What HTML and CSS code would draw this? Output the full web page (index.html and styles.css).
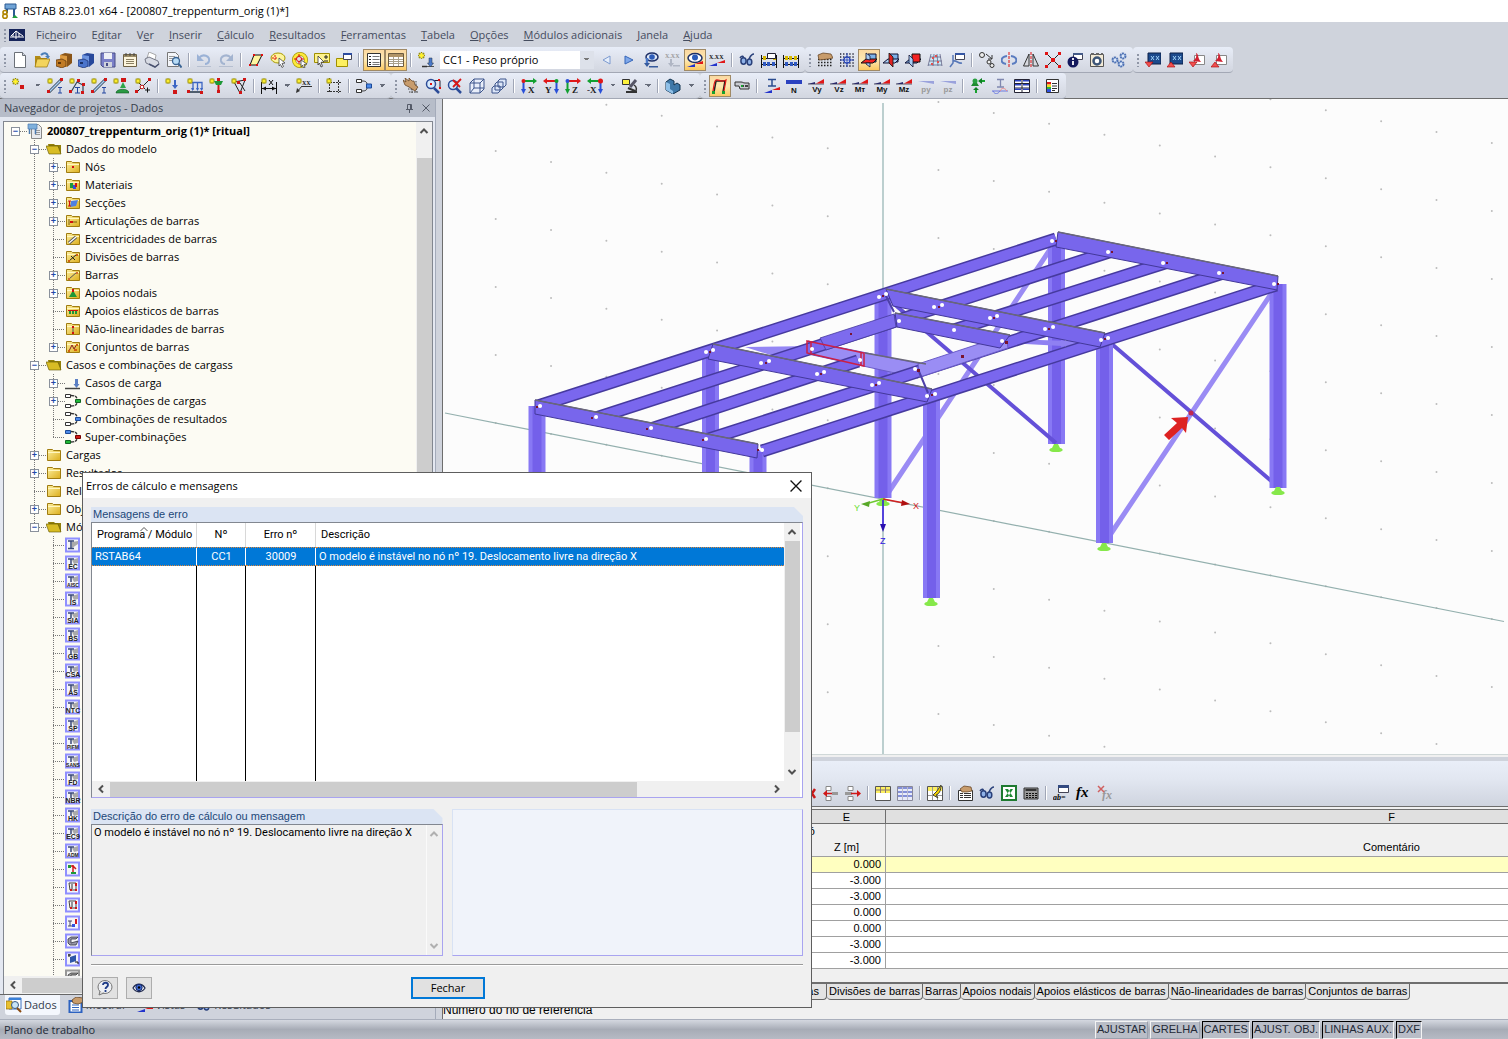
FILE: index.html
```html
<!DOCTYPE html>
<html lang="pt">
<head>
<meta charset="utf-8">
<title>RSTAB 8.23.01 x64 - [200807_treppenturm_orig (1)*]</title>
<link rel="stylesheet" href="styles.css">
</head>
<body>
<svg class="sprite" aria-hidden="true">
<defs>
<linearGradient id="gy" x1="0" y1="0" x2="1" y2="1"><stop offset="0" stop-color="#fdf0a0"/><stop offset="1" stop-color="#dcae1c"/></linearGradient>
<symbol id="st" viewBox="0 0 16 16"><path d="M4 0v8M0 4h8M1 1l6 6M7 1L1 7" stroke="#8f8400" stroke-width="1.6"/><path d="M4 1v6M1 4h6M2 2l4 4M6 2L2 6" stroke="#fff22e" stroke-width="1.2"/></symbol>
<symbol id="app" viewBox="0 0 16 16"><path d="M3 1h11v5H3z" fill="#6fa3d6" stroke="#2c5a92"/><path d="M5 6v4M12 6v8" stroke="#2c5a92" stroke-width="2"/><path d="M10 15h6l-3-3z" fill="#1ea03a"/><circle cx="3" cy="9.500" r="2" fill="none" stroke="#b08600" stroke-width="1.600"/><circle cx="3" cy="13.200" r="2.200" fill="none" stroke="#b08600" stroke-width="1.600"/></symbol>
<symbol id="mdi" viewBox="0 0 16 12"><path d="M0 0h16v12H0z" fill="#16245a"/><path d="M1 8h14M7 2v8M2 7l5-5 7 5M4 8V5M10 8V4" stroke="#fff" fill="none"/></symbol>
<symbol id="new" viewBox="0 0 16 16"><path d="M2.500 .5h8l3 3v12h-11z" fill="#fff" stroke="#6b7078"/><path d="M10.500 .5v3h3" fill="#d4d8e0" stroke="#6b7078"/></symbol>
<symbol id="open" viewBox="0 0 16 16"><path d="M1 4h5l1 2h6v9H1z" fill="#b28b16"/><path d="M3 7h13l-3 8H1z" fill="#f3d45d" stroke="#97720c" stroke-width=".7"/><path d="M7 3c3-3 6-2 7 1" fill="none" stroke="#4b7fb8" stroke-width="2"/><path d="M11 4h5l-2 3z" fill="#4b7fb8"/></symbol>
<symbol id="boxo" viewBox="0 0 16 16"><path d="M4 3l5-2 7 1v9l-5 4-7-2z" fill="#8a5417"/><path d="M4 3l7 1v11l-7-2z" fill="#dd9b42"/><path d="M0 8l6-1 4 2v5l-4 2-6-2z" fill="#c17b25" stroke="#58310a" stroke-width=".7"/><path d="M2 11h3" stroke="#402200" stroke-width="1.500"/></symbol>
<symbol id="boxb" viewBox="0 0 16 16"><path d="M4 3l5-2 7 1v9l-5 4-7-2z" fill="#27489b"/><path d="M4 3l7 1v11l-7-2z" fill="#6e95e0"/><path d="M0 8l6-1 4 2v5l-4 2-6-2z" fill="#4a74cc" stroke="#172d6b" stroke-width=".7"/><path d="M2 11h3" stroke="#0d1c48" stroke-width="1.500"/></symbol>
<symbol id="save" viewBox="0 0 16 16"><path d="M1 1h14v14H3l-2-2z" fill="#7b80c8" stroke="#484c86"/><path d="M4 1h8v6H4z" fill="#eef0f6"/><path d="M4 10h8v5H4z" fill="#d0d3dc"/><path d="M6 11h2v3H6z" fill="#484c86"/></symbol>
<symbol id="clip" viewBox="0 0 16 16"><path d="M1.500 2.500h13v12h-13z" fill="#fdf5dc" stroke="#6e6044"/><path d="M2 3h12v2H2z" fill="#9a8c68"/><path d="M4 1v3M8 1v3M12 1v3" stroke="#444"/><path d="M4 7.500h8M4 9.500h8M4 11.500h8" stroke="#8a7f63"/></symbol>
<symbol id="print" viewBox="0 0 16 16"><path d="M3 6l2-6 7 3-1 5z" fill="#fff" stroke="#888" stroke-width=".7"/><path d="M1 7l4-2 9 4 1 3-4 3-9-4z" fill="#d8dbe4" stroke="#5c6070" stroke-width=".8"/><path d="M5 12l6 3 4-3" stroke="#4a5270" stroke-width="1.500" fill="none"/></symbol>
<symbol id="prev" viewBox="0 0 16 16"><path d="M1.500 .5h8l3 3v11h-11z" fill="#f4f6fa" stroke="#777"/><path d="M3 4.500h6M3 6.500h7M3 8.500h4" stroke="#999"/><circle cx="10" cy="9" r="3.500" fill="#b8dcf6" stroke="#3a6494" stroke-width="1.300"/><path d="M12.500 11.500l3 4" stroke="#3a6494" stroke-width="2"/></symbol>
<symbol id="undo" viewBox="0 0 16 16"><path d="M3 6c4-5 11-2 10 3-.5 2-2 3-4 3" fill="none" stroke="#9bb2d6" stroke-width="2"/><path d="M1 2v7h7z" fill="#9bb2d6"/><path d="M1 14.500h14" stroke="#b6bfd0"/></symbol>
<symbol id="redo" viewBox="0 0 16 16"><path d="M13 6C9 1 2 4 3 9c.5 2 2 3 4 3" fill="none" stroke="#a3b4d0" stroke-width="2"/><path d="M15 2v7H8z" fill="#a3b4d0"/><path d="M1 14.500h14" stroke="#b6bfd0"/></symbol>
<symbol id="selp" viewBox="0 0 16 16"><path d="M6 3h8l-5 10H2z" fill="#fff6a0" stroke="#111"/><path d="M5 2h2v2H5zM13 2h2v2h-2zM1 12h2v2H1zM8 12h2v2H8z" fill="#e01010"/></symbol>
<symbol id="sele" viewBox="0 0 16 16"><ellipse cx="8" cy="6" rx="7" ry="5" fill="#fdf59a" stroke="#a89800"/><path d="M5 3v6M2 6h6" stroke="#e01010" stroke-dasharray="2 1"/><path d="M9 6l6 5-3 .5 1.500 3-1.500 1-1.500-3L9 14z" fill="#fff" stroke="#444" stroke-width=".8"/></symbol>
<symbol id="selr" viewBox="0 0 16 16"><circle cx="8" cy="8" r="6" fill="none" stroke="#a89800" stroke-width="4"/><circle cx="8" cy="8" r="6" fill="none" stroke="#fdea3c" stroke-width="2.500"/><circle cx="7" cy="7" r="2.500" fill="none" stroke="#e01010"/><path d="M7 2v3M7 9v3M2 7h3M9 7h3" stroke="#e01010"/><path d="M9 8l6 4-3 .5 1 3-1.500.5-1-3L9 15z" fill="#fff" stroke="#444" stroke-width=".8"/></symbol>
<symbol id="selw" viewBox="0 0 16 16"><path d="M.5 1.500h15v9H.5z" fill="#fdf28c" stroke="#a08f00"/><path d="M4 4l6 6-3 .3 1.500 4-1.500.7-1.500-4L4 13z" fill="#fff" stroke="#333" stroke-width=".8"/><path d="M12 3v4M10 5h4M10 9h4" stroke="#222"/></symbol>
<symbol id="selo" viewBox="0 0 16 16"><path d="M.5 6.500h11v8H.5z" fill="#fdf060" stroke="#a08f00"/><path d="M7.500 1.500h8v6h-8z" fill="#fff" stroke="#445"/><path d="M7 1h9v2H7z" fill="#2c4ca0"/></symbol>
<symbol id="nav" viewBox="0 0 16 16"><path d="M1.500 1.500h13v13h-13z" fill="#fff" stroke="#333"/><path d="M3 4.500h2M3 7.500h2M3 10.500h2M3 12.500h2" stroke="#222"/><path d="M6.500 4.500h7M6.500 7.500h7M6.500 10.500h7M6.500 12.500h7" stroke="#777"/></symbol>
<symbol id="tab" viewBox="0 0 16 16"><path d="M.5 1.500h15v13H.5z" fill="#fff" stroke="#6a5a40"/><path d="M1 2h14v3H1z" fill="#b09468"/><path d="M1 7.500h14M1 9.500h14M1 11.500h14M5.500 5v9M10.500 5v9" stroke="#a9a08c"/></symbol>
<symbol id="lcn" viewBox="0 0 16 16"><use href="#st" width="14" height="14"/><path d="M9 14.500h7" stroke="#555"/><path d="M11 6h3v5h1.500l-3 4-3-4H11z" fill="#4a78c8" stroke="#234" stroke-width=".5"/><path d="M4 14.500h5" stroke="#333" stroke-width="1.500"/></symbol>
<symbol id="pl" viewBox="0 0 16 16"><path d="M11 4v8L4 8z" fill="#e6eefa" stroke="#7c9ad0"/></symbol>
<symbol id="pr" viewBox="0 0 16 16"><path d="M4 4v8l8-4z" fill="#7fa8ea" stroke="#3565b8"/></symbol>
<symbol id="eyel" viewBox="0 0 16 16"><ellipse cx="9" cy="5" rx="6" ry="4" fill="#dfe8f6" stroke="#1d2f66" stroke-width="1.500"/><circle cx="9" cy="5" r="2.800" fill="#2d5cb8"/><path d="M4 6v6" stroke="#4a78c8" stroke-width="2.500"/><path d="M1 11h6l-3 4zM6 14h9v1.500H6z" fill="#365a9c"/></symbol>
<symbol id="xxg" viewBox="0 0 16 16"><text x="0" y="6" class="svt g">X.XX</text><path d="M5 7h2v4h2l-3 4-3-4h2zM8 13h7v1.500H8z" fill="#b0b6c4"/></symbol>
<symbol id="eyer" viewBox="0 0 16 16"><ellipse cx="8" cy="6" rx="7" ry="4.500" fill="#fff" stroke="#1d2f66" stroke-width="1.500"/><circle cx="8" cy="5.500" r="3" fill="#2d5cb8"/><path d="M0 15h8v-3z" fill="#2233cc"/><path d="M8 12h8V9z" fill="#e01818"/></symbol>
<symbol id="xxr" viewBox="0 0 16 16"><text x="0" y="7" class="svt">X.XX</text><path d="M0 14h8v-3z" fill="#2233cc"/><path d="M8 11h8V8z" fill="#e01818"/></symbol>
<symbol id="glas" viewBox="0 0 16 16"><path d="M1 6c2-3 4-2 3 1M10 7c1-2 2-5 5-5" fill="none" stroke="#29407a" stroke-width="1.500"/><ellipse cx="4.500" cy="9" rx="2.600" ry="3.200" fill="#8fb2e8" stroke="#29407a" stroke-width="1.500"/><ellipse cx="10.500" cy="10" rx="2.300" ry="3" fill="#8fb2e8" stroke="#29407a" stroke-width="1.500"/></symbol>
<symbol id="aba" viewBox="0 0 16 16"><path d="M.5 3v13M15.500 3v13M0 6.500h16M0 12.500h16" stroke="#111"/><path d="M2 4h3v4H2zM12 4h3v4h-3z" fill="#d6b700"/><path d="M2 10h3v4H2zM6 10h3v4H6zM11 10h3v4h-3z" fill="#2f58c0"/><path d="M6.500 1.500h8v5h-8z" fill="#fff" stroke="#223"/></symbol>
<symbol id="abb" viewBox="0 0 16 16"><path d="M.5 3v13M15.500 3v13M0 6.500h16M0 12.500h16" stroke="#111"/><path d="M2 4h3v4H2zM6 4h3v4H6zM11 4h3v4h-3z" fill="#d6b700"/><path d="M2 10h3v4H2zM7 10h3v4H7zM11 10h3v4h-3z" fill="#2f58c0"/></symbol>
<symbol id="handg" viewBox="0 0 16 16"><path d="M1 7.500h15M1 10.500h15M1 13.500h15" stroke="#222" stroke-width="1.500" stroke-dasharray="1.500 1.500"/><path d="M1 3l5-2 8 1 2 4-5 1-9 1z" fill="#c89c6c" stroke="#5c3a18" stroke-width=".7"/></symbol>
<symbol id="snap" viewBox="0 0 16 16"><path d="M1 2h15M1 5h15M1 8h15M1 11h15M1 14h15" stroke="#223" stroke-width="1.300" stroke-dasharray="1.300 1.800"/><circle cx="8" cy="8" r="3" fill="#fff" stroke="#2a48b8" stroke-width="1.300"/><path d="M8 1v14M1 8h14" stroke="#2a48b8"/></symbol>
<symbol id="wp1" viewBox="0 0 16 16"><path d="M7 2h8v8H7z" fill="#7db2e8" stroke="#113"/><path d="M0 11l5-4h11l-4 4z" fill="#f22222" stroke="#111"/><path d="M5 1l4 3v4l-4-1zM5 11h4v4l-4-3z" fill="#a9cdf4" stroke="#113" stroke-width=".8"/></symbol>
<symbol id="wp2" viewBox="0 0 16 16"><path d="M7 2h8v8H7z" fill="#7db2e8" stroke="#113"/><path d="M0 11l5-4h11l-4 4z" fill="#a9cdf4" stroke="#113"/><path d="M6 1l4 4v10l-4-4z" fill="#e02020" stroke="#111" stroke-width=".8"/></symbol>
<symbol id="wp3" viewBox="0 0 16 16"><path d="M0 11l5-4h11l-4 4z" fill="#7db2e8" stroke="#113"/><path d="M7 2h8v8H7z" fill="#f22222" stroke="#111"/><path d="M4 3l4 4v8l-4-4z" fill="#a9cdf4" stroke="#113" stroke-width=".8"/></symbol>
<symbol id="grd" viewBox="0 0 16 16"><path d="M4 2h9l2 12H1z" fill="#cfe6f4"/><path d="M4 2L1 14M7 2L6 14M10 2l1 12M13 2l2 12M3 5h11M2 9h13M1 13h14" stroke="#668" stroke-width=".8"/><path d="M5 5h2v2H5zM10 9h2v2h-2zM8 3h2v2H8zM4 11h2v2H4z" fill="#e05050"/></symbol>
<symbol id="wrt" viewBox="0 0 16 16"><path d="M6.500 1.500h9v6h-9z" fill="#fff" stroke="#445"/><path d="M6 1h10v2H6z" fill="#3556a4"/><path d="M4 3v8l-3 4M4 9c4-1 5 3 9 2" stroke="#5878b8" stroke-width="1.500" fill="none"/></symbol>
<symbol id="copy" viewBox="0 0 16 16"><circle cx="3" cy="3" r="2.500" fill="#eee" stroke="#333"/><circle cx="10" cy="10" r="2" fill="#eee" stroke="#333"/><circle cx="13" cy="13.500" r="2" fill="#eee" stroke="#333"/><path d="M7 2l6 5M13 3v4H9" stroke="#333" fill="none"/></symbol>
<symbol id="rot" viewBox="0 0 16 16"><path d="M6 4C-1 5-1 11 5 12M10 4c7 1 7 7 1 8" fill="none" stroke="#5a7cc0" stroke-width="2"/><path d="M8 0v16" stroke="#e01010" stroke-dasharray="3 1"/></symbol>
<symbol id="mir" viewBox="0 0 16 16"><path d="M6 2v12H.5zM10 2v12h5.500z" fill="#d7d9df" stroke="#333"/><path d="M8 0v16" stroke="#e01010" stroke-dasharray="3 1"/></symbol>
<symbol id="xx" viewBox="0 0 16 16"><path d="M1 1l14 14M15 1L1 15" stroke="#222"/><path d="M0 0h3v3H0zM13 0h3v3h-3zM0 13h3v3H0zM13 13h3v3h-3zM6 6h4v4H6z" fill="#e01414"/></symbol>
<symbol id="inf" viewBox="0 0 16 16"><path d="M6.500 1.500h9v6h-9z" fill="#fff" stroke="#445"/><path d="M6 1h10v2H6z" fill="#445a88"/><circle cx="6" cy="10" r="5.500" fill="#141a5e"/><path d="M6 6v2M6 9v4" stroke="#fff" stroke-width="1.800"/></symbol>
<symbol id="cog" viewBox="0 0 16 16"><path d="M1.500 2.500h13v12h-13z" fill="#f2ead6" stroke="#555"/><path d="M2 1h3v2H2zM7 1h3v2H7zM12 1h2v2h-2z" fill="#666"/><circle cx="8" cy="9" r="3.500" fill="#fff" stroke="#3c5578" stroke-width="2.500"/></symbol>
<symbol id="cogs" viewBox="0 0 16 16"><g fill="#dce8fa" stroke="#4e72b4" stroke-width="2" stroke-dasharray="2 .6"><circle cx="4" cy="8" r="2.500"/><circle cx="12" cy="4" r="2.500"/><circle cx="10" cy="12" r="2.500"/></g></symbol>
<symbol id="dx1" viewBox="0 0 16 16"><path d="M3 1h13v11H3z" fill="#1c4a8c" stroke="#0c2048"/><path d="M6 4l3 4M9 4L6 8M11 4l3 4M14 4l-3 4" stroke="#9fd0f8"/><path d="M0 10h8l-4 5z" fill="#f05050" stroke="#a00" stroke-width=".6"/></symbol>
<symbol id="dx2" viewBox="0 0 16 16"><path d="M3 1h13v11H3z" fill="#1c4a8c" stroke="#0c2048"/><path d="M6 4l3 4M9 4L6 8M11 4l3 4M14 4l-3 4" stroke="#9fd0f8"/><path d="M0 15h8l-4-5z" fill="#f05050" stroke="#a00" stroke-width=".6"/></symbol>
<symbol id="dx3" viewBox="0 0 16 16"><path d="M5.500 3.500h10v9h-10z" fill="#fff" stroke="#888"/><path d="M7 1c3 1 1 4 5 9l-8-1c3-2 4-5 3-8z" fill="#d02030"/><path d="M0 10h8l-4 5z" fill="#f05050" stroke="#a00" stroke-width=".6"/></symbol>
<symbol id="dx4" viewBox="0 0 16 16"><path d="M5.500 3.500h10v9h-10z" fill="#fff" stroke="#888"/><path d="M7 1c3 1 1 4 5 9l-8-1c3-2 4-5 3-8z" fill="#d02030"/><path d="M0 15h8l-4-5z" fill="#f05050" stroke="#a00" stroke-width=".6"/></symbol>
<symbol id="nn" viewBox="0 0 16 16"><use href="#st" width="14" height="14"/><path d="M8 7h4v4H8z" fill="#d01616"/></symbol>
<symbol id="nm" viewBox="0 0 16 16"><path d="M2 14L14 2" stroke="#345" stroke-width="3"/><path d="M2 14L14 2" stroke="#a9cdf4" stroke-width="1.500"/><path d="M0 12h3v3H0zM13 0h3v3h-3z" fill="#d01616"/><path d="M11 9.500h4M13 9v6M11 15h4" stroke="#2648a0"/><use href="#st" width="12" height="12"/></symbol>
<symbol id="ns" viewBox="0 0 16 16"><path d="M2 14L8 4l6 3v7" fill="none" stroke="#345" stroke-width="1.200"/><path d="M0 12h3v3H0zM8 1h3v3H8zM13 5h3v3h-3zM12 13h3v3h-3z" fill="#d01616"/><use href="#st" width="12" height="12"/><path d="M6 9.500h5M8.500 9v6M6 15h5" stroke="#2648a0"/></symbol>
<symbol id="nsup" viewBox="0 0 16 16"><use href="#st" width="12" height="12"/><path d="M8 0h5v4H8z" fill="#d01616"/><path d="M10 4l3 6H7z" fill="#2ea54a"/><path d="M3 15c0-5 13-5 13 0z" fill="#2a9a44" stroke="#115522" stroke-width=".6"/></symbol>
<symbol id="nh" viewBox="0 0 16 16"><path d="M2 14L14 2M4 5l6 6" stroke="#222"/><path d="M0 12h3v3H0zM13 0h3v3h-3z" fill="#d01616"/><circle cx="7" cy="9" r="1.800" fill="#fff" stroke="#d01616"/><path d="M10 12h5M12.500 9.500v5" stroke="#111"/><use href="#st" width="12" height="12"/></symbol>
<symbol id="l1" viewBox="0 0 16 16"><use href="#st" width="12" height="12"/><path d="M9 2h2v5h2l-3 4-3-4h2z" fill="#3c66c4"/><path d="M8 12h4v4H8z" fill="#d01616"/></symbol>
<symbol id="l2" viewBox="0 0 16 16"><path d="M3 4.500h12v7M6 5v7M10.500 5v7" stroke="#3c66c4" stroke-width="1.300" fill="none"/><path d="M4 10h3l-1.500 3zM9 10h3l-1.500 3zM13 10h3l-1.500 3z" fill="#3c66c4"/><path d="M1 14h14" stroke="#234" stroke-width="1.500"/><path d="M0 12h3v3H0zM13 13h3v3h-3z" fill="#d01616"/><use href="#st" width="12" height="12"/></symbol>
<symbol id="l3" viewBox="0 0 16 16"><use href="#st" width="12" height="12"/><path d="M5 3h9l-2 4H7z" fill="#1e9838"/><path d="M8 0h3v3H8zM8 12h3v3H8z" fill="#d01616"/><path d="M9.500 7v5" stroke="#d01616" stroke-width="2"/></symbol>
<symbol id="l4" viewBox="0 0 16 16"><path d="M3 4l6 11 5-13zM9 5l5 8" fill="none" stroke="#222"/><path d="M8 13h3v3H8zM12 0h3v3h-3zM6 3h3v3H6z" fill="#d01616"/><use href="#st" width="12" height="12"/></symbol>
<symbol id="dim" viewBox="0 0 16 16"><path d="M.5 4v12M15.500 4v12M1 10.500h14" stroke="#111"/><path d="M1 10.500l4-2v4zM15 10.500l-4-2v4z" fill="#111"/><path d="M8 2l4 5M12 2L8 7" stroke="#111"/><use href="#st" width="12" height="12"/></symbol>
<symbol id="com" viewBox="0 0 16 16"><text x="6" y="7" class="svt">XX</text><path d="M6 8.500h10M1 14l5-6" stroke="#333"/><path d="M0 15l1-5 3 3z" fill="#333"/><use href="#st" width="12" height="12"/></symbol>
<symbol id="vis" viewBox="0 0 16 16"><path d="M3.500 0v15M12.500 2v13M1 4.500h14M1 13.500h14" stroke="#333" stroke-dasharray="2 1"/><use href="#st" width="12" height="12"/></symbol>
<symbol id="comb" viewBox="0 0 16 16"><path d="M.5 1.500h5v3h-5zM.5 11.500h5v3h-5z" fill="#fff" stroke="#333"/><path d="M6 3c4 0 5 1 5 4M6 13c4 0 5-1 5-4" fill="none" stroke="#333"/><path d="M10.500 6h5v4h-5z" fill="#4d8ae8" stroke="#1c4a98"/></symbol>
<symbol id="pan" viewBox="0 0 16 16"><path d="M5 8h10M5 11h10M6 14h9M13 3v12M9 6v9" stroke="#444" stroke-dasharray="1.500 1"/><path d="M0 2l3 2-1-4 4 3 0-3 3 3 2 0 1 4 3 2-3 4-6-4-4-2z" fill="#c89c6c" stroke="#5c3a18" stroke-width=".7"/></symbol>
<symbol id="zw" viewBox="0 0 16 16"><path d="M4 2.500h11v8" fill="none" stroke="#223"/><circle cx="6" cy="6" r="4.500" fill="#d8eafc" stroke="#2c4c98" stroke-width="1.500"/><path d="M9 10l5 5" stroke="#2c4c98" stroke-width="2.500"/><path d="M5 5h2v2H5zM14 9h2v2h-2zM13 1h2v2h-2z" fill="#e01010"/></symbol>
<symbol id="zx" viewBox="0 0 16 16"><circle cx="6" cy="7" r="4.500" fill="#d8eafc" stroke="#2c4c98" stroke-width="1.500"/><path d="M9 10l5 5" stroke="#2c4c98" stroke-width="2.500"/><path d="M6 2l7 7M14 1L6 9" stroke="#d81818" stroke-width="1.800"/></symbol>
<symbol id="cube" viewBox="0 0 16 16"><path d="M1 5l4-4h10v10l-4 4H1z" fill="#e8eefa" stroke="#3c558c"/><path d="M1 5h10v10M11 5l4-4M5 1v9h10M5 10l-4 5" fill="none" stroke="#3c558c"/></symbol>
<symbol id="cubs" viewBox="0 0 16 16"><path d="M7 3l2-2h6v6l-2 2H7zM4 6l2-2h6v6l-2 2H4zM1 10l2-2h6v5l-2 2H1z" fill="#dce6f8" stroke="#3c558c"/></symbol>
<symbol id="vx" viewBox="0 0 16 16"><path d="M2 3h12" stroke="#12a030" stroke-width="2"/><path d="M12 0l4 3-4 3z" fill="#12a030"/><path d="M2.500 4v8" stroke="#2a50d8" stroke-width="2"/><path d="M0 11h5l-2.500 5z" fill="#2a50d8"/><circle cx="2.500" cy="3" r="2" fill="#e01818"/><text x="7" y="15" class="svs">X</text></symbol>
<symbol id="vy" viewBox="0 0 16 16"><path d="M13 3H2" stroke="#e01818" stroke-width="2"/><path d="M4 0L0 3l4 3z" fill="#e01818"/><path d="M13.500 4v8" stroke="#2a50d8" stroke-width="2"/><path d="M11 11h5l-2.500 5z" fill="#2a50d8"/><circle cx="13.500" cy="3" r="2" fill="#12a030"/><text x="2" y="15" class="svs">Y</text></symbol>
<symbol id="vz" viewBox="0 0 16 16"><path d="M2 3h12" stroke="#e01818" stroke-width="2"/><path d="M12 0l4 3-4 3z" fill="#e01818"/><path d="M2.500 4v8" stroke="#12a030" stroke-width="2"/><path d="M0 11h5l-2.500 5z" fill="#12a030"/><circle cx="2.500" cy="3" r="2" fill="#2a50d8"/><text x="7" y="15" class="svs">Z</text></symbol>
<symbol id="vn" viewBox="0 0 16 16"><path d="M13 3H2" stroke="#12a030" stroke-width="2"/><path d="M4 0L0 3l4 3z" fill="#12a030"/><path d="M13.500 4v8" stroke="#2a50d8" stroke-width="2"/><path d="M11 11h5l-2.500 5z" fill="#2a50d8"/><circle cx="13.500" cy="3" r="2.500" fill="#e01818"/><text x="0" y="15" class="svs">-X</text></symbol>
<symbol id="rend" viewBox="0 0 16 16"><path d="M.5 1.500h7v5h-7z" fill="#fdf23c" stroke="#333"/><path d="M14 2L8 9" stroke="#556" stroke-width="3"/><path d="M4 14h11M6 10l7 3" stroke="#333" stroke-width="2"/><path d="M12 7c3 2 3 5 1 7" fill="none" stroke="#333" stroke-width="1.500"/></symbol>
<symbol id="iso" viewBox="0 0 16 16"><path d="M1 4l4-3 4 2v4l3-2 3 2v5l-7 4-7-4z" fill="#3f78a8" stroke="#12324e"/><path d="M1 4l4 2v5l3 2v3l-7-4z" fill="#8fc0e8"/></symbol>
<symbol id="defo" viewBox="0 0 16 16"><path d="M2 14L4 3h9l-2 11" fill="none" stroke="#222" stroke-width="1.500"/><path d="M1 13C2 8 2 3 4 2c3-1 5 3 10 0l-2 11" fill="none" stroke="#e01818" stroke-width="1.200"/><path d="M0 13h3v3H0zM10 13h3v3h-3z" fill="#18a030"/></symbol>
<symbol id="tag" viewBox="0 0 16 16"><path d="M1 4h6c2 0 2 1 4 1h4v6H6L5 8H1z" fill="#c8cbd2" stroke="#333"/><path d="M7 7h3v2H7zM11 7h3v2h-3z" fill="#444"/><path d="M7 7h2v2H7z" fill="#18a030"/></symbol>
<symbol id="isec" viewBox="0 0 16 16"><path d="M4 1.500h8M8 2v6M4 8h8" stroke="#2b4c90" stroke-width="1.500"/><path d="M0 15h8v-3z" fill="#2233cc"/><path d="M8 12h8V9z" fill="#e01818"/></symbol>
<symbol id="fl" viewBox="0 0 16 8"><path d="M0 6h16" stroke="#334" stroke-width=".8"/><path d="M0 6h7v-2z" fill="#2a2a6a"/><path d="M8 5.500h8V1z" fill="#e01818"/></symbol>
<symbol id="rn" viewBox="0 0 16 16"><path d="M0 2h16v4H0z" fill="#2b42c0"/><text x="8" y="15" class="svb">N</text></symbol>
<symbol id="rvy" viewBox="0 0 16 16"><use href="#fl" width="16" height="8"/><text x="9" y="14" class="svb">Vy</text></symbol>
<symbol id="rvz" viewBox="0 0 16 16"><use href="#fl" width="16" height="8"/><text x="9" y="14" class="svb">Vz</text></symbol>
<symbol id="rmt" viewBox="0 0 16 16"><use href="#fl" width="16" height="8"/><text x="8" y="14" class="svb">Mт</text></symbol>
<symbol id="rmy" viewBox="0 0 16 16"><use href="#fl" width="16" height="8"/><text x="8" y="14" class="svb">My</text></symbol>
<symbol id="rmz" viewBox="0 0 16 16"><use href="#fl" width="16" height="8"/><text x="8" y="14" class="svb">Mz</text></symbol>
<symbol id="rpy" viewBox="0 0 16 16"><path d="M0 3h16v3z" fill="#9aa2dc"/><text x="8" y="14" class="svb g">py</text></symbol>
<symbol id="rpz" viewBox="0 0 16 16"><path d="M0 3h16v3z" fill="#9aa2dc"/><text x="8" y="14" class="svb g">pz</text></symbol>
<symbol id="rea" viewBox="0 0 16 16"><path d="M1 8l4-6 4 6z" fill="#1e8a30"/><circle cx="5" cy="3" r="2.500" fill="#28a040"/><path d="M15 3h-5M6 15v-5" stroke="#18a030" stroke-width="2"/><path d="M12 0L8 3l4 3zM3 12h6L6 9z" fill="#0f8024"/></symbol>
<symbol id="iw" viewBox="0 0 16 16"><path d="M5 1.500h7M8.500 2v7M5 9h7" stroke="#8088b0" stroke-width="1.300"/><path d="M0 13h16M1 13c2 4 5 3 7 0" stroke="#6a78e0" fill="none"/><path d="M8 13c2-4 5-3 7 0" stroke="#e88" fill="none"/></symbol>
<symbol id="wins" viewBox="0 0 16 16"><path d="M.5 1.500h15v13H.5zM8 1v14M0 5.500h16M0 10h16" fill="#fff" stroke="#223"/><path d="M1 2h6v1.500H1zM9 2h6v1.500H9zM1 6h6v1.500H1zM9 6h6v1.500H9zM1 10.500h6V12H1zM9 10.500h6V12H9z" fill="#2b42c0"/></symbol>
<symbol id="leg" viewBox="0 0 16 16"><path d="M2.500 1.500h12v13h-12z" fill="#fff" stroke="#333"/><path d="M8 5.500h5M8 8h5M8 10.500h5M8 12.500h3" stroke="#333"/><path d="M3 4h4v2.500H3z" fill="#e01818"/><path d="M3 6.500h4V9H3z" fill="#f2e020"/><path d="M3 9h4v2H3z" fill="#28b040"/><path d="M3 11h4v3H3z" fill="#3050e0"/></symbol>
<symbol id="rowa" viewBox="0 0 16 16"><path d="M3 1.500h5v4H3zM3 11.500h5v4H3z" fill="#fff" stroke="#888"/><path d="M9 7h6v3H9z" fill="#999"/><path d="M3 8.500h6" stroke="#d01818" stroke-width="1.500"/><path d="M4 5L0 8.500 4 12z" fill="#d01818"/></symbol>
<symbol id="rowb" viewBox="0 0 16 16"><path d="M3 1.500h5v4H3zM3 11.500h5v4H3z" fill="#fff" stroke="#888"/><path d="M0 7h7v3H0z" fill="#999"/><path d="M6 8.500h7" stroke="#d01818" stroke-width="1.500"/><path d="M12 5l4 3.500-4 3.500z" fill="#d01818"/></symbol>
<symbol id="ty" viewBox="0 0 16 16"><path d="M.5 1.500h15v14H.5z" fill="#fff" stroke="#555"/><path d="M1 2h14v6H1z" fill="#fdf060"/><path d="M1 5h14M5.500 2v6M10.500 2v6" stroke="#877"/></symbol>
<symbol id="tb2" viewBox="0 0 16 16"><path d="M.5 1.500h15v14H.5z" fill="#e8ecfa" stroke="#889"/><path d="M1 2h14v2H1zM1 6h14v2H1zM1 10h14v2H1z" fill="#8490d8"/><path d="M5.500 2v13M10.500 2v13" stroke="#bbc"/></symbol>
<symbol id="tp" viewBox="0 0 16 16"><path d="M.5 1.500h15v14H.5z" fill="#fff" stroke="#555"/><path d="M1 2h14v4H1z" fill="#fdf060"/><path d="M5.500 2v13M10.500 2v13M1 10.500h14" stroke="#999"/><path d="M14 0c0 6-2 9-5 10l2 3-5-3 4-4z" fill="#f2d000" stroke="#443"/></symbol>
<symbol id="hl" viewBox="0 0 16 16"><path d="M1.500 5.500h14v10h-14z" fill="#fff" stroke="#333"/><path d="M3 8.500h3M7 8.500h7M3 10.500h3M7 10.500h7M3 12.500h3M7 12.500h7" stroke="#333"/><path d="M3 4l4-3 7 1 1 4-5 1-5 0z" fill="#c89c6c" stroke="#5c3a18" stroke-width=".7"/></symbol>
<symbol id="hb" viewBox="0 0 16 16"><path d="M1.500 4h12v11.500h-12z" fill="#fff" stroke="#2c62c0" stroke-width="2"/><path d="M4 8h7M4 10.500h7M4 13h7" stroke="#2c62c0"/><path d="M4 3l4-3 7 1 1 4-6 2-5-1z" fill="#c89c6c" stroke="#5c3a18" stroke-width=".7"/></symbol>
<symbol id="xls" viewBox="0 0 16 16"><path d="M1 1h14v14H1z" fill="#fff" stroke="#1e7a30" stroke-width="2"/><path d="M4 4h3l5 8H9zM12 4H9.500L4 12h3z" fill="#1e8a34"/></symbol>
<symbol id="calc" viewBox="0 0 16 16"><path d="M1 3h14v11H1z" fill="#999" stroke="#333"/><path d="M2.500 4h11v2h-11z" fill="#333"/><path d="M3 8.500h11M3 10.500h11M3 12.500h11" stroke="#111" stroke-dasharray="2 1"/></symbol>
<symbol id="abx" viewBox="0 0 16 16"><path d="M5.500 .5h10v7h-10z" fill="#fff" stroke="#445"/><path d="M5 0h11v3H5z" fill="#334a80"/><text x="0" y="15" class="svi">ab=</text></symbol>
<symbol id="fx" viewBox="0 0 16 16"><text x="1" y="12" class="svf">fx</text></symbol>
<symbol id="fxx" viewBox="0 0 16 16"><text x="5" y="14" class="svf sm">fx</text><path d="M1 1l6 6M7 1L1 7" stroke="#d06060" stroke-width="1.500"/></symbol>
<symbol id="rx" viewBox="0 0 16 16"><path d="M8 4l6 9M14 4L8 13" stroke="#c81818" stroke-width="2.500"/></symbol>
<symbol id="doc" viewBox="0 0 16 16"><path d="M4.500 1.500h7l3 3v11h-10z" fill="#e8eaee" stroke="#888"/><path d="M8 7.500h5M8 9.500h5M8 11.500h5" stroke="#999"/><path d="M1 1h9v5H1z" fill="#7fb0dc" stroke="#4a7ab0" stroke-width=".7"/><path d="M2.500 6v5M8.500 6v5" stroke="#4a7ab0" stroke-width="1.500"/></symbol>
<symbol id="fo" viewBox="0 0 16 16"><path d="M2 3h6l1 1h6v9H4z" fill="#93800a"/><path d="M0 5h12l3 8H3z" fill="#d8bc24" stroke="#5c5000" stroke-width=".6"/></symbol>
<symbol id="fc" viewBox="0 0 16 16"><path d="M1.500 2.500h5l1 1h7v10h-13z" fill="url(#gy)" stroke="#a07c10"/><path d="M2 5.500h12" stroke="#fff6c0"/></symbol>
<symbol id="f1" viewBox="0 0 16 16"><use href="#fc"/><path d="M7 7h2v2H7z" fill="#d01010"/></symbol>
<symbol id="f2" viewBox="0 0 16 16"><use href="#fc"/><path d="M5 6h3v5H5z" fill="#1e9838"/><path d="M8 8h3v4H8z" fill="#3050e0"/><path d="M10 6h2v4h-2z" fill="#d01010"/></symbol>
<symbol id="f3" viewBox="0 0 16 16"><use href="#fc"/><path d="M6 6l7-1-2 6-6 1z" fill="#5080e0"/><path d="M3 6h3M4.500 6v5M3 11h3" stroke="#d01010"/></symbol>
<symbol id="f4" viewBox="0 0 16 16"><use href="#fc"/><path d="M4 6v6M5 9h7" stroke="#7a5a10"/><path d="M5 8h3v2H5z" fill="#d01010"/></symbol>
<symbol id="f5" viewBox="0 0 16 16"><use href="#fc"/><path d="M4 12l7-6" stroke="#555" stroke-width="3"/><path d="M4 12l7-6" stroke="#fff" stroke-width="1.200"/></symbol>
<symbol id="f6" viewBox="0 0 16 16"><use href="#fc"/><path d="M4 12l8-7M6 7l4 4" stroke="#222"/><path d="M3 11h2v2H3zM11 5h2v2h-2z" fill="#d06010"/></symbol>
<symbol id="f7" viewBox="0 0 16 16"><use href="#fc"/><path d="M4 12l8-7" stroke="#555"/><path d="M3 11h2v2H3zM11 5h2v2h-2z" fill="#d07030"/></symbol>
<symbol id="f8" viewBox="0 0 16 16"><use href="#fc"/><path d="M4 12h8l-3-5H7z" fill="#1e9838"/><path d="M7 4h2v3H7z" fill="#d01010"/></symbol>
<symbol id="f9" viewBox="0 0 16 16"><use href="#fc"/><path d="M3 7h10v1H3z" fill="#d01010"/><path d="M4 8h2v3H4zM7 8h2v3H7zM10 8h2v3h-2z" fill="#1e9838"/></symbol>
<symbol id="f10" viewBox="0 0 16 16"><use href="#fc"/><path d="M8 5v8" stroke="#555"/><path d="M7 5h2v2H7zM7 11h2v2H7z" fill="#d01010"/></symbol>
<symbol id="f11" viewBox="0 0 16 16"><use href="#fc"/><path d="M4 12l3-6 2 4 3-5" fill="none" stroke="#822"/><path d="M3 11h2v2H3zM11 5h2v2h-2zM9 10h3v2H9z" fill="#d06010"/></symbol>
<symbol id="lc" viewBox="0 0 16 16"><path d="M0 13.500h15" stroke="#444" stroke-width="1.500"/><path d="M10 4h3v5h1.500L11.500 13 8.500 9H10z" fill="#5c80c4"/></symbol>
<symbol id="c1" viewBox="0 0 16 16"><path d="M.5 1.500h5v3h-5zM.5 11.500h5v3h-5z" fill="#fff" stroke="#333"/><path d="M6 2.500c4 0 6 1 6 4M6 13c4 0 6-1 6-4" fill="none" stroke="#333" stroke-width="1.300" stroke-dasharray="3 1"/><path d="M10.500 6.500h5v3h-5z" fill="#1eb838" stroke="#116622"/></symbol>
<symbol id="c2" viewBox="0 0 16 16"><path d="M.5 1.500h5v3h-5zM.5 11.500h5v3h-5z" fill="#fff" stroke="#333"/><path d="M6 2.500c4 0 6 1 6 4M6 13c4 0 6-1 6-4" fill="none" stroke="#333" stroke-width="1.300" stroke-dasharray="3 1"/><path d="M10.500 6.500h5v3h-5z" fill="#4d8ae8" stroke="#1c4a98"/></symbol>
<symbol id="c3" viewBox="0 0 16 16"><path d="M.5 1.500h5v3h-5z" fill="#4d8ae8" stroke="#1c4a98"/><path d="M.5 11.500h5v3h-5z" fill="#1eb838" stroke="#116622"/><path d="M6 2.500c4 0 6 1 6 4M6 13c4 0 6-1 6-4" fill="none" stroke="#333" stroke-width="1.300" stroke-dasharray="3 1"/><path d="M10.500 6.500h5v3h-5z" fill="#d01818" stroke="#700"/></symbol>
<symbol id="ms" viewBox="0 0 16 16"><path d="M0 1.500h13v13H0z" fill="#f4f4f8" stroke="#8f8fff" stroke-width="2" transform="translate(1)"/></symbol>
<symbol id="m" viewBox="0 0 16 16"><use href="#ms"/><path d="M7 5l6-2v5l-4 1z" fill="#aaa"/><path d="M3 4h6M6 4v5" stroke="#3a4a78" stroke-width="1.500"/></symbol>
<symbol id="m1" viewBox="0 0 16 16"><use href="#ms"/><path d="M7 11l6-4v-3l-6 1z" fill="#aaa"/><path d="M3 4h6M6 4v7M3 11.500h6" stroke="#3a4a78" stroke-width="1.500"/></symbol>
<symbol id="m2" viewBox="0 0 16 16"><use href="#ms"/><path d="M8 4v8M3 5h5l3 3" stroke="#d01818" stroke-width="1.500" fill="none"/><path d="M3 4h3v3H3zM6 11h5v2H6z" fill="#1e9838"/></symbol>
<symbol id="m3" viewBox="0 0 16 16"><use href="#ms"/><path d="M4 4h7v7H5z" fill="none" stroke="#444"/><path d="M7 5v5" stroke="#333"/><path d="M10 4h2v3h-2zM5 10h2v2H5zM10 10h2v2h-2z" fill="#d01818"/></symbol>
<symbol id="m4" viewBox="0 0 16 16"><use href="#ms"/><path d="M3 6h4M5 6v5M3 11h4" stroke="#446"/><path d="M7 9h3v3H7z" fill="#3050e0"/><path d="M10 4h2v5h-2z" fill="#d01818"/></symbol>
<symbol id="m5" viewBox="0 0 16 16"><use href="#ms"/><path d="M3 6l3-2h7l-2 2H6v4l7-2-2 4H5l-2-2z" fill="#99a" stroke="#334" stroke-width=".8"/></symbol>
<symbol id="m6" viewBox="0 0 16 16"><use href="#ms"/><path d="M5 6l6-2v6l-6 2z" fill="#2f57a8"/><path d="M3 4h3M4 3v3M10 11h3v2" stroke="#111" fill="none"/></symbol>
<symbol id="qm" viewBox="0 0 16 16"><ellipse cx="8" cy="7" rx="7" ry="6.500" fill="#eef0f4" stroke="#777"/><path d="M3 11l-1 4 5-2" fill="#ddd" stroke="#777"/><path d="M6 5c0-3 5-3 5 0 0 2-2.500 2-2.500 4M8.500 10v2" stroke="#1f3c88" stroke-width="1.800" fill="none"/></symbol>
<symbol id="eye" viewBox="0 0 16 16"><path d="M2 8c3-5 9-5 12 0-3 5-9 5-12 0z" fill="#fff" stroke="#222c50" stroke-width="1.300"/><circle cx="8" cy="7.500" r="3.200" fill="#3e68d0" stroke="#14286a"/><circle cx="8" cy="7.500" r="1.200"/></symbol>
<symbol id="tdd" viewBox="0 0 16 16"><path d="M3 1h12v11H3z" fill="#fff" stroke="#3a70c0"/><path d="M3 1h12v2H3z" fill="#3a80d8"/><path d="M0 4h6v8H0z" fill="#e8c030" stroke="#906c08" stroke-width=".7"/><circle cx="9" cy="8" r="3.500" fill="#c8e4f8" stroke="#3a5a84"/><path d="M11 11l4 4" stroke="#8a4a10" stroke-width="2"/></symbol>
<symbol id="chu" viewBox="0 0 10 10"><path d="M1.500 7L5 3.500 8.500 7" fill="none" stroke="currentColor" stroke-width="2"/></symbol>
<symbol id="chd" viewBox="0 0 10 10"><path d="M1.500 3L5 6.500 8.500 3" fill="none" stroke="currentColor" stroke-width="2"/></symbol>
<symbol id="chl" viewBox="0 0 10 10"><path d="M7 1.500L3.500 5 7 8.500" fill="none" stroke="currentColor" stroke-width="2"/></symbol>
<symbol id="chr" viewBox="0 0 10 10"><path d="M3 1.500L6.500 5 3 8.500" fill="none" stroke="currentColor" stroke-width="2"/></symbol>
</defs>
</svg>

<header class="title"><svg class="ic"><use href="#app"/></svg><h1>RSTAB 8.23.01 x64 - [200807_treppenturm_orig (1)*]</h1></header>

<nav class="menu">
<i class="grip"></i><svg class="mdi"><use href="#mdi"/></svg>
<button>Fic<u>h</u>eiro</button><button>E<u>d</u>itar</button><button>V<u>e</u>r</button><button><u>I</u>nserir</button><button><u>C</u>álculo</button><button><u>R</u>esultados</button><button><u>F</u>erramentas</button><button><u>T</u>abela</button><button><u>O</u>pções</button><button><u>M</u>ódulos adicionais</button><button><u>J</u>anela</button><button><u>A</u>juda</button>
</nav>

<div class="bars">
<div class="bar">
<div class="grp"><i class="grip"></i>
<button class="b" title="Novo"><svg><use href="#new"/></svg></button><button class="b" title="Abrir"><svg><use href="#open"/></svg></button><button class="b" title="Gestor de projetos"><svg><use href="#boxo"/></svg></button><button class="b" title="Gestor de blocos"><svg><use href="#boxb"/></svg></button><button class="b" title="Guardar"><svg><use href="#save"/></svg></button><button class="b" title="Dados gerais"><svg><use href="#clip"/></svg></button><button class="b" title="Imprimir"><svg><use href="#print"/></svg></button><button class="b" title="Relatório"><svg><use href="#prev"/></svg></button><i class="sep"></i>
<button class="b" title="Anular"><svg><use href="#undo"/></svg></button><button class="b" title="Refazer"><svg><use href="#redo"/></svg></button><i class="sep"></i>
<button class="b" title="Selecionar por plano"><svg><use href="#selp"/></svg></button><button class="b" title="Selecionar por elipse"><svg><use href="#sele"/></svg></button><button class="b" title="Selecionar por anel"><svg><use href="#selr"/></svg></button><button class="b" title="Seleção adicional"><svg><use href="#selw"/></svg></button><button class="b" title="Seleção especial"><svg><use href="#selo"/></svg></button><i class="sep"></i>
<button class="b on" title="Navegador"><svg><use href="#nav"/></svg></button><button class="b on" title="Tabelas"><svg><use href="#tab"/></svg></button><i class="sep"></i>
<button class="b" title="Novo caso de carga"><svg><use href="#lcn"/></svg></button>
<select class="combo" aria-label="Caso de carga"><option>CC1 - Peso próprio</option></select>
<button class="b" title="Anterior"><svg><use href="#pl"/></svg></button><button class="b" title="Seguinte"><svg><use href="#pr"/></svg></button><button class="b" title="Mostrar cargas"><svg><use href="#eyel"/></svg></button><button class="b" title="Valores das cargas"><svg><use href="#xxg"/></svg></button><button class="b on" title="Mostrar resultados"><svg><use href="#eyer"/></svg></button><button class="b" title="Valores dos resultados"><svg><use href="#xxr"/></svg></button><i class="sep"></i>
<button class="b" title="Vista"><svg><use href="#glas"/></svg></button><button class="b" title="Calcular"><svg><use href="#aba"/></svg></button><button class="b" title="Calcular tudo"><svg><use href="#abb"/></svg></button>
</div>
<div class="grp"><i class="grip"></i>
<button class="b" title="Definir grelha"><svg><use href="#handg"/></svg></button><button class="b" title="Ajustar"><svg><use href="#snap"/></svg></button><button class="b on" title="Plano XY"><svg><use href="#wp1"/></svg></button><button class="b" title="Plano YZ"><svg><use href="#wp2"/></svg></button><button class="b" title="Plano XZ"><svg><use href="#wp3"/></svg></button><button class="b" title="Grelha"><svg><use href="#grd"/></svg></button><button class="b" title="Plano de trabalho"><svg><use href="#wrt"/></svg></button><i class="sep"></i>
<button class="b" title="Copiar"><svg><use href="#copy"/></svg></button><button class="b" title="Rodar"><svg><use href="#rot"/></svg></button><button class="b" title="Espelhar"><svg><use href="#mir"/></svg></button><button class="b" title="Ligar barras"><svg><use href="#xx"/></svg></button><button class="b" title="Informação"><svg><use href="#inf"/></svg></button><button class="b" title="Parâmetros"><svg><use href="#cog"/></svg></button><button class="b" title="Opções"><svg><use href="#cogs"/></svg></button>
</div>
<div class="grp"><i class="grip"></i>
<button class="b" title="Importar DXF"><svg><use href="#dx1"/></svg></button><button class="b" title="Exportar DXF"><svg><use href="#dx2"/></svg></button><button class="b" title="Importar"><svg><use href="#dx3"/></svg></button><button class="b" title="Exportar"><svg><use href="#dx4"/></svg></button>
</div>
</div>
<div class="bar">
<div class="grp"><i class="grip"></i>
<button class="b" title="Novo nó"><svg><use href="#nn"/></svg></button><button class="d" title="Mais nós"></button><button class="b" title="Nova barra"><svg><use href="#nm"/></svg></button><button class="b" title="Conjunto de barras"><svg><use href="#ns"/></svg></button><button class="b" title="Secção"><svg><use href="#nm"/></svg></button><button class="b" title="Apoio nodal"><svg><use href="#nsup"/></svg></button><button class="b" title="Articulação"><svg><use href="#nh"/></svg></button><i class="sep"></i>
<button class="b" title="Carga nodal"><svg><use href="#l1"/></svg></button><button class="b" title="Carga de barra"><svg><use href="#l2"/></svg></button><button class="b" title="Deslocamento imposto"><svg><use href="#l3"/></svg></button><button class="b" title="Imperfeição"><svg><use href="#l4"/></svg></button><i class="sep"></i>
<button class="b" title="Cotagem"><svg><use href="#dim"/></svg></button><button class="d" title="Mais cotagens"></button><button class="b" title="Comentário"><svg><use href="#com"/></svg></button><i class="sep"></i><button class="b" title="Linhas auxiliares"><svg><use href="#vis"/></svg></button><i class="sep"></i><button class="b" title="Combinações"><svg><use href="#comb"/></svg></button><button class="d" title="Mais combinações"></button>
</div>
<div class="grp"><i class="grip"></i>
<button class="b" title="Mover"><svg><use href="#pan"/></svg></button><button class="b" title="Ampliar janela"><svg><use href="#zw"/></svg></button><button class="b" title="Mostrar tudo"><svg><use href="#zx"/></svg></button><button class="b" title="Isométrica"><svg><use href="#cube"/></svg></button><button class="b" title="Vista anterior"><svg><use href="#cubs"/></svg></button><i class="sep"></i>
<button class="b" title="Vista X"><svg><use href="#vx"/></svg></button><button class="b" title="Vista Y"><svg><use href="#vy"/></svg></button><button class="b" title="Vista Z"><svg><use href="#vz"/></svg></button><button class="b" title="Vista -X"><svg><use href="#vn"/></svg></button><button class="d" title="Mais vistas"></button><button class="b" title="Visibilidade"><svg><use href="#rend"/></svg></button><button class="d" title="Mais"></button><i class="sep"></i><button class="b" title="Modelo sólido"><svg><use href="#iso"/></svg></button><button class="d" title="Mais modelos"></button>
</div>
<div class="grp"><i class="grip"></i>
<button class="b on" title="Deformações"><svg><use href="#defo"/></svg></button><button class="b" title="Etiquetas"><svg><use href="#tag"/></svg></button><i class="sep"></i>
<button class="b" title="Diagramas"><svg><use href="#isec"/></svg></button><button class="b" title="N"><svg><use href="#rn"/></svg></button><button class="b" title="Vy"><svg><use href="#rvy"/></svg></button><button class="b" title="Vz"><svg><use href="#rvz"/></svg></button><button class="b" title="MT"><svg><use href="#rmt"/></svg></button><button class="b" title="My"><svg><use href="#rmy"/></svg></button><button class="b" title="Mz"><svg><use href="#rmz"/></svg></button><button class="b" title="py"><svg><use href="#rpy"/></svg></button><button class="b" title="pz"><svg><use href="#rpz"/></svg></button><i class="sep"></i>
<button class="b" title="Reações"><svg><use href="#rea"/></svg></button><button class="b" title="Tensões"><svg><use href="#iw"/></svg></button><button class="b" title="Janelas"><svg><use href="#wins"/></svg></button><i class="sep"></i><button class="b" title="Painel"><svg><use href="#leg"/></svg></button>
</div>
</div>
</div>

<main class="main">
<aside class="side">
<header class="shead"><h2>Navegador de projetos - Dados</h2><svg viewBox="0 0 28 10"><path d="M2 6.500h7M3.500 6V1.500h4V6M6.500 1v5M5.500 7v3M18.500 1.500l7 7M25.500 1.500l-7 7" fill="none" stroke="#555b68"/></svg></header>
<div class="tbox">
<div class="tree">
<div class="r r0"><i class="x">−</i><i class="h"></i><svg><use href="#doc"/></svg><b>200807_treppenturm_orig (1)* [ritual]</b></div>
<ul>
<li><div class="r"><i class="x">−</i><i class="h"></i><svg><use href="#fo"/></svg>Dados do modelo</div>
<ul>
<li><div class="r"><i class="x">+</i><i class="h"></i><svg><use href="#f1"/></svg>Nós</div></li>
<li><div class="r"><i class="x">+</i><i class="h"></i><svg><use href="#f2"/></svg>Materiais</div></li>
<li><div class="r"><i class="x">+</i><i class="h"></i><svg><use href="#f3"/></svg>Secções</div></li>
<li><div class="r"><i class="x">+</i><i class="h"></i><svg><use href="#f4"/></svg>Articulações de barras</div></li>
<li><div class="r"><i class="n"></i><svg><use href="#f5"/></svg>Excentricidades de barras</div></li>
<li><div class="r"><i class="n"></i><svg><use href="#f6"/></svg>Divisões de barras</div></li>
<li><div class="r"><i class="x">+</i><i class="h"></i><svg><use href="#f7"/></svg>Barras</div></li>
<li><div class="r"><i class="x">+</i><i class="h"></i><svg><use href="#f8"/></svg>Apoios nodais</div></li>
<li><div class="r"><i class="n"></i><svg><use href="#f9"/></svg>Apoios elásticos de barras</div></li>
<li><div class="r"><i class="n"></i><svg><use href="#f10"/></svg>Não-linearidades de barras</div></li>
<li><div class="r"><i class="x">+</i><i class="h"></i><svg><use href="#f11"/></svg>Conjuntos de barras</div></li>
</ul></li>
<li><div class="r"><i class="x">−</i><i class="h"></i><svg><use href="#fo"/></svg>Casos e combinações de cargass</div>
<ul>
<li><div class="r"><i class="x">+</i><i class="h"></i><svg><use href="#lc"/></svg>Casos de carga</div></li>
<li><div class="r"><i class="x">+</i><i class="h"></i><svg><use href="#c1"/></svg>Combinações de cargas</div></li>
<li><div class="r"><i class="n"></i><svg><use href="#c2"/></svg>Combinações de resultados</div></li>
<li><div class="r"><i class="n"></i><svg><use href="#c3"/></svg>Super-combinações</div></li>
</ul></li>
<li><div class="r"><i class="x">+</i><i class="h"></i><svg><use href="#fc"/></svg>Cargas</div></li>
<li><div class="r"><i class="x">+</i><i class="h"></i><svg><use href="#fc"/></svg>Resultados</div></li>
<li><div class="r"><i class="n"></i><svg><use href="#fc"/></svg>Relatórios</div></li>
<li><div class="r"><i class="x">+</i><i class="h"></i><svg><use href="#fc"/></svg>Objetos</div></li>
<li><div class="r"><i class="x">−</i><i class="h"></i><svg><use href="#fo"/></svg>Módulos</div>
<ul>
<li><div class="r"><i class="n"></i><svg><use href="#m1"/></svg></div></li>
<li><div class="r"><i class="n"></i><svg viewBox="0 0 16 16"><use href="#m"/><text x="8" y="14" class="svm">EC</text></svg></div></li>
<li><div class="r"><i class="n"></i><svg viewBox="0 0 16 16"><use href="#m"/><text x="8" y="14" class="svm s4">AISC</text></svg></div></li>
<li><div class="r"><i class="n"></i><svg viewBox="0 0 16 16"><use href="#m"/><text x="8" y="14" class="svm">IS</text></svg></div></li>
<li><div class="r"><i class="n"></i><svg viewBox="0 0 16 16"><use href="#m"/><text x="8" y="14" class="svm">SIA</text></svg></div></li>
<li><div class="r"><i class="n"></i><svg viewBox="0 0 16 16"><use href="#m"/><text x="8" y="14" class="svm">BS</text></svg></div></li>
<li><div class="r"><i class="n"></i><svg viewBox="0 0 16 16"><use href="#m"/><text x="8" y="14" class="svm">GB</text></svg></div></li>
<li><div class="r"><i class="n"></i><svg viewBox="0 0 16 16"><use href="#m"/><text x="8" y="14" class="svm">CSA</text></svg></div></li>
<li><div class="r"><i class="n"></i><svg viewBox="0 0 16 16"><use href="#m"/><text x="8" y="14" class="svm">AS</text></svg></div></li>
<li><div class="r"><i class="n"></i><svg viewBox="0 0 16 16"><use href="#m"/><text x="8" y="14" class="svm">NTC</text></svg></div></li>
<li><div class="r"><i class="n"></i><svg viewBox="0 0 16 16"><use href="#m"/><text x="8" y="14" class="svm">SP</text></svg></div></li>
<li><div class="r"><i class="n"></i><svg viewBox="0 0 16 16"><use href="#m"/><text x="8" y="14" class="svm s4">PIFM</text></svg></div></li>
<li><div class="r"><i class="n"></i><svg viewBox="0 0 16 16"><use href="#m"/><text x="8" y="14" class="svm s4">SANS</text></svg></div></li>
<li><div class="r"><i class="n"></i><svg viewBox="0 0 16 16"><use href="#m"/><text x="8" y="14" class="svm">FD</text></svg></div></li>
<li><div class="r"><i class="n"></i><svg viewBox="0 0 16 16"><use href="#m"/><text x="8" y="14" class="svm">NBR</text></svg></div></li>
<li><div class="r"><i class="n"></i><svg viewBox="0 0 16 16"><use href="#m"/><text x="8" y="14" class="svm">HK</text></svg></div></li>
<li><div class="r"><i class="n"></i><svg viewBox="0 0 16 16"><use href="#m"/><text x="8" y="14" class="svm">EC9</text></svg></div></li>
<li><div class="r"><i class="n"></i><svg viewBox="0 0 16 16"><use href="#m"/><text x="8" y="14" class="svm s4">ADM</text></svg></div></li>
<li><div class="r"><i class="n"></i><svg><use href="#m2"/></svg></div></li>
<li><div class="r"><i class="n"></i><svg><use href="#m3"/></svg></div></li>
<li><div class="r"><i class="n"></i><svg><use href="#m3"/></svg></div></li>
<li><div class="r"><i class="n"></i><svg><use href="#m4"/></svg></div></li>
<li><div class="r"><i class="n"></i><svg><use href="#m5"/></svg></div></li>
<li><div class="r"><i class="n"></i><svg><use href="#m6"/></svg></div></li>
<li><div class="r"><i class="n"></i><svg class="gray"><use href="#m5"/></svg></div></li>
</ul></li>
</ul>
</div>
<div class="vs"><svg><use href="#chu"/></svg><i></i></div>
</div>
<div class="hs shs"><svg><use href="#chl"/></svg><i></i></div>
<div class="stabs"><button class="act"><svg><use href="#tdd"/></svg>Dados</button><button><svg><use href="#hb"/></svg>Mostrar</button><button><svg><use href="#isec"/></svg>Vistas</button><button><svg><use href="#glas"/></svg>Resultados</button></div>
</aside>

<section class="work">
<svg class="scene" viewBox="443 99 1065 657" preserveAspectRatio="xMinYMin slice">
<path class="dots" d="M495.700-53l1200 236M495.700 15l1200 236M495.700 83l1200 236M495.700 151l1200 236M495.700 219l1200 236M495.700 287l1200 236M495.700 355l1200 236M495.700 423l1200 236M495.700 491l1200 236M495.700 559l1200 236M495.700 627l1200 236M495.700 695l1200 236"/>
<path d="M883 103v652" stroke="#bccfcf" stroke-width="2"/>
<path d="M445 413L1504 621.500" stroke="#94b0ae" stroke-width="1.200"/>
<g class="brace"><path d="M1053 245L886 496M1275 288L1106 541"/></g>
<g class="col"><path d="M528.500 406h17v80h-17zM702 350h17v130h-17zM874.500 294h17v204h-17zM1048 240h17v204h-17z"/></g>
<g class="colc"><path d="M537 406v80M710.500 352v120M883 296v202M1056.500 240v204"/></g>
<path class="bdark" d="M893 303L1056 443M1106 339L1277 486"/>
<path d="M745 347l70-1 5 8-40 4z" fill="#9486f4"/>
<path d="M1006 339l95 3-2 6-90-5z" fill="#8f80f2"/>
<g class="col"><path d="M749.500 450h17v40h-17zM923 397h17v201h-17zM1096 341h17v202h-17zM1269.500 284h17v204h-17z"/></g>
<g class="colc"><path d="M758 452v30M931.500 397v201M1104.500 343v200M1278 284v204"/></g>
<path class="light" d="M808 341l118 24-8 13-110-24z"/>
<g class="pur"><path d="M538 406L1056 239M596 418L1112 251M651 429L858 361M954 330L1168 262M706 440L1223 273M762 451L1276 285"/></g>
<g class="purin"><path d="M538 406L1056 239M596 418L1112 251M651 429L858 361M954 330L1168 262M706 440L1223 273M762 451L1276 285"/></g>
<path class="light" d="M918 364l88-29 2 13-88 29z"/>
<path d="M820 338l74-24 2 13-70 23z" fill="#7d6bee" stroke="#453a9c" stroke-width=".8"/>
<g class="beam"><path d="M535 400l223 44-1 14-222-44zM713 344l219 45-5 13-219-43zM886 289l219 44-5 14-207-41zM895 313l115 22-10 13-103-21zM1058 232l220 44-1 14-221-43z"/></g>
<path class="topl" d="M535 400l223 44M713 344l219 45M886 289l219 44M895 313l115 22M1058 232l220 44M865 353l61 11"/>
<path d="M918 369l10 24M885 294l9 18" stroke="#4d3fa8" stroke-width="2"/>
<path d="M807 341l57 12v13l-57-13zM811 341v12M861 352v13" fill="none" stroke="#cc1f45" stroke-width="1.500"/>
<g fill="#7a1430"><path d="M536 406h2v2h-2zM591 417h2v2h-2zM646 428h2v2h-2zM702 439h2v2h-2zM757 449h2v2h-2zM709 351h2v2h-2zM765 362h2v2h-2zM820 373h2v2h-2zM875 384h2v2h-2zM931 394h2v2h-2zM882 295h2v2h-2zM938 306h2v2h-2zM993 317h2v2h-2zM1048 328h2v2h-2zM1104 338h2v2h-2zM1055 240h2v2h-2zM1111 251h2v2h-2zM1166 262h2v2h-2zM1222 272h2v2h-2zM1277 283h2v2h-2zM961 355h3v3h-3zM1005 341h3v3h-3zM917 369h3v3h-3zM850 333h2v2h-2z"/></g>
<path class="wd" d="M540 406h.1M596 417h.1M651 428h.1M706 439h.1M762 450h.1M706 352h.1M713 350h.1M761 363h.1M769 361h.1M817 374h.1M824 372h.1M872 385h.1M879 383h.1M927 396h.1M935 394h.1M879 297h.1M886 294h.1M934 307h.1M942 305h.1M990 318h.1M997 316h.1M1045 329h.1M1053 327h.1M1101 340h.1M1108 338h.1M1052 241h.1M1108 252h.1M1163 263h.1M1219 273h.1M1274 284h.1M899 321h.1M954 330h.1M1002 341h.1M915 369h.1M860 360h.1M812 349h.1"/>
<g fill="#86e84a"><path d="M881 498h4l2 4c4 1 4 4-4 4s-8-3-4-4zM929 598h4l2 4c4 1 4 4-4 4s-8-3-4-4zM1054 444h4l2 4c4 1 4 4-4 4s-8-3-4-4zM1102 543h4l2 4c4 1 4 4-4 4s-8-3-4-4zM1276 487h4l2 4c4 1 4 4-4 4s-8-3-4-4z"/></g>
<path d="M883 499l21 4" stroke="#d42020" stroke-width="1.500"/><path d="M902 500l8 4-9 2z" fill="#b01010"/>
<path d="M883 499l-14 4" stroke="#6ec832" stroke-width="1.500"/><path d="M870 501l-9 3 8 3z" fill="#58a828"/>
<path d="M883 500v26" stroke="#3214e0" stroke-width="1.500"/><path d="M880 524h6l-3 8z" fill="#2a10b0"/>
<text x="913" y="509" class="ax" fill="#d42020">X</text><text x="854" y="511" class="ax" fill="#6ee032">Y</text><text x="880" y="544" class="ax" fill="#3214e0">Z</text>
<circle cx="1191" cy="413" r="2.500" fill="#c02850"/>
<path d="M1164 435l13-12-6-5 17-1-2 16-4-5-13 12z" fill="#dd2222"/>
</svg>
<div class="tbar">
<button class="b" title="Eliminar"><svg><use href="#rx"/></svg></button><button class="b" title="Inserir linha"><svg><use href="#rowa"/></svg></button><button class="b" title="Remover linha"><svg><use href="#rowb"/></svg></button><i class="sep"></i><button class="b" title="Tabela ativa"><svg><use href="#ty"/></svg></button><button class="b" title="Todas as tabelas"><svg><use href="#tb2"/></svg></button><i class="sep"></i><button class="b" title="Selecionar"><svg><use href="#tp"/></svg></button><i class="sep"></i><button class="b" title="Definições"><svg><use href="#hl"/></svg></button><button class="b" title="Vista"><svg><use href="#glas"/></svg></button><button class="b" title="Excel"><svg><use href="#xls"/></svg></button><button class="b" title="Calculadora"><svg><use href="#calc"/></svg></button><i class="sep"></i><button class="b" title="Parâmetros"><svg><use href="#abx"/></svg></button><button class="b" title="Fórmula"><svg><use href="#fx"/></svg></button><button class="b" title="Eliminar fórmula"><svg><use href="#fxx"/></svg></button>
</div>
<div class="grid">
<table>
<colgroup><col class="cd"><col class="ce"><col class="cf"></colgroup>
<thead><tr class="let"><th></th><th>E</th><th>F</th></tr>
<tr class="hd h1"><th colspan="2">Coordenadas do nó</th><th rowspan="2">Comentário</th></tr>
<tr class="hd"><th></th><th>Z [m]</th></tr></thead>
<tbody><tr class="cur"><td></td><td>0.000</td><td></td></tr><tr><td></td><td>-3.000</td><td></td></tr><tr><td></td><td>-3.000</td><td></td></tr><tr><td></td><td>0.000</td><td></td></tr><tr><td></td><td>0.000</td><td></td></tr><tr><td></td><td>-3.000</td><td></td></tr><tr><td></td><td>-3.000</td><td></td></tr></tbody>
</table>
</div>
<div class="wtabs"><button class="w1">Articulações de barras</button><button>Divisões de barras</button><button>Barras</button><button>Apoios nodais</button><button>Apoios elásticos de barras</button><button>Não-linearidades de barras</button><button>Conjuntos de barras</button></div>
<p class="hint">Número do nó de referência</p>
</section>

<div class="dlg" role="dialog" aria-labelledby="dt">
<header><h2 id="dt">Erros de cálculo e mensagens</h2><button class="cl" title="Fechar janela"><svg viewBox="0 0 11 11"><path d="M.5 .5l10 10M10.500 .5l-10 10" stroke="#111" stroke-width="1.200"/></svg></button></header>
<div class="dbody">
<section class="box">
<h3>Mensagens de erro</h3>
<div class="list">
<div class="lrow">
<div class="tw">
<table>
<colgroup><col class="k1"><col class="k2"><col class="k3"><col></colgroup>
<thead><tr><th><svg class="srt" viewBox="0 0 8 4"><path d="M.5 4L4 .5 7.500 4" fill="none" stroke="#555"/></svg>Programa / Módulo</th><th>Nº</th><th>Erro nº</th><th>Descrição</th></tr></thead>
<tbody><tr><td>RSTAB64</td><td>CC1</td><td>30009</td><td>O modelo é instável no nó nº 19. Deslocamento livre na direção X</td></tr>
<tr class="fill"><td></td><td></td><td></td><td></td></tr></tbody>
</table>
</div>
<div class="vs dvs"><svg><use href="#chu"/></svg><i></i><svg><use href="#chd"/></svg></div>
</div>
<div class="hs dhs"><svg><use href="#chl"/></svg><i></i><svg><use href="#chr"/></svg></div>
</div>
</section>
<div class="two">
<section class="box">
<h3><label for="desc">Descrição do erro de cálculo ou mensagem</label></h3>
<div class="ta"><textarea id="desc" readonly>O modelo é instável no nó nº 19. Deslocamento livre na direção X</textarea><div class="vs tvs"><svg><use href="#chu"/></svg><svg><use href="#chd"/></svg></div></div>
</section>
<section class="blank"></section>
</div>
<footer><button class="sq" title="Ajuda"><svg><use href="#qm"/></svg></button><button class="sq" title="Mostrar"><svg><use href="#eye"/></svg></button><button class="ok">Fechar</button></footer>
</div>
</div>
</main>

<footer class="status"><span>Plano de trabalho</span><div class="cells"><button>AJUSTAR</button><button>GRELHA</button><button class="in">CARTES</button><button class="in">AJUST. OBJ.</button><button class="in">LINHAS AUX.</button><button class="in">DXF</button></div></footer>
</body>
</html>
```
FILE: styles.css
```css
* { box-sizing: border-box; }
html, body { margin: 0; height: 100%; }
body {
  display: flex; flex-direction: column; overflow: hidden;
  font: 11px/18px "Open Sans", "Noto Sans", sans-serif; color: #000; background: #cfd3dc;
}
h1, h2, h3, p, ul { margin: 0; padding: 0; font: inherit; }
ul { list-style: none; }
button { font: inherit; color: inherit; background: none; border: 0; padding: 0; margin: 0; }
svg { flex: none; display: block; }
.sprite { position: absolute; width: 0; height: 0; }
.svt { font: bold 6px "Liberation Serif", serif; fill: #111; }
.svs { font: bold 9px "Liberation Serif", serif; fill: #222; }
.svb { font: bold 8px "Liberation Sans", sans-serif; fill: #111; text-anchor: middle; }
.svm { font: bold 7px "Liberation Sans", sans-serif; fill: #222; text-anchor: middle; }
.s4 { font-size: 5px; }
.svi { font: italic bold 8px "Liberation Serif", serif; }
.svf { font: italic bold 15px "Liberation Serif", serif; }
.sm { font-size: 12px; fill: #999; }
.g { fill: #999; }

.title { flex: none; height: 22px; background: #fff; display: flex; align-items: center; gap: 5px; padding-left: 2px; }
.ic { width: 16px; height: 16px; }

.menu { flex: none; height: 25px; display: flex; align-items: center; color: #454c5e; }
.mdi { width: 16px; height: 12px; margin-right: 11px; }
.menu button { margin-right: 15px; }
.grip { flex: none; width: 9px; height: 14px; background: radial-gradient(circle, #8f96a6 1px, transparent 1px) 3px 0 / 4px 4px repeat-y; }

.bars { flex: none; height: 52px; border-bottom: 1px solid #6e6e6e; }
.bar { display: flex; height: 26px; }
.grp { display: flex; align-items: center; height: 26px; padding-right: 3px; border-radius: 4px; background: linear-gradient(#e8edf8, #dde1eb 50%, #d2d6e0); border-bottom: 1px solid #a3a8b5; }
.b { flex: none; width: 22px; height: 22px; display: flex; align-items: center; justify-content: center; }
.b svg { width: 16px; height: 16px; }
.b.on { background: linear-gradient(#fbd8a0, #fde9b4 50%, #fcc860); border: 1px solid #a08a66; }
.sep { flex: none; width: 8px; height: 14px; background: linear-gradient(#a0a6b6, #a0a6b6) 3px 0 / 1px 14px no-repeat, linear-gradient(#fff, #fff) 4px 0 / 1px 14px no-repeat; }
.d { flex: none; width: 13px; height: 22px; background: conic-gradient(from -45deg at 50% 100%, #666c7a 90deg, transparent 0) center / 6px 3px no-repeat; }
.combo { appearance: none; width: 154px; height: 18px; margin: 0 2px 0 3px; padding: 0 0 0 3px; border: 0; border-radius: 0; font: inherit; color: #000;
  background: conic-gradient(from -45deg at 50% 100%, #777 90deg, transparent 0) 143px 7px / 6px 3px no-repeat, linear-gradient(#dde1ea, #dde1ea) right / 14px 18px no-repeat, #fff; }

.main { flex: 1; min-height: 0; position: relative; display: grid; grid-template-columns: 436px minmax(0, 1fr); gap: 6px; }
.side { display: flex; flex-direction: column; min-height: 0; border-right: 1px solid #a4abba; background: #e4e8f1; }
.shead { flex: none; height: 18px; display: flex; align-items: center; justify-content: space-between; padding: 0 3px 0 4px; background: #b7bdc9; color: #363d4c; }
.shead svg { width: 28px; height: 10px; }
.tbox { flex: 1; min-height: 0; display: flex; margin: 4px 2px 0 3px; border: 1px solid #828790; border-bottom: 0; background: #fcfbf3; }
.tree { flex: 1; overflow: hidden; padding-left: 26px; }
.r { display: flex; align-items: center; height: 18px; white-space: nowrap; }
.r0 { margin-left: -19px; }
.r svg { width: 16px; height: 16px; margin-right: 4px; overflow: visible; }
.r b { font-weight: 700; }
.gray { filter: grayscale(1); }
.tree ul ul { padding-left: 19px; }
.tree li { background: repeating-linear-gradient(#777 0 1px, transparent 1px 2px) 4px 0 / 1px 100% no-repeat; }
.tree li:last-child { background-size: 1px 9px; }
.x { flex: none; width: 9px; height: 9px; border: 1px solid #8a919c; background: #fff; color: #2348a8; font: 700 9px/6px "Liberation Sans", sans-serif; text-align: center; }
.h { width: 7px; height: 1px; background: repeating-linear-gradient(90deg, #777 0 1px, transparent 1px 2px); }
.n { width: 12px; height: 1px; margin-left: 4px; background: repeating-linear-gradient(90deg, #777 0 1px, transparent 1px 2px); }
.vs { flex: none; width: 16px; display: flex; flex-direction: column; align-items: center; background: #f0f0f0; color: #505050; }
.vs svg, .hs svg { width: 10px; height: 10px; }
.vs svg { margin: 4px 0; }
.vs i { width: 15px; flex: 1; background: #cdcdcd; }
.tbox .vs i { margin-top: 18px; }
.hs { flex: none; height: 16px; display: flex; align-items: center; background: #f0f0f0; color: #505050; }
.hs svg { margin: 0 4px; }
.hs i { height: 15px; background: #cdcdcd; }
.shs { margin: 0 2px 0 3px; height: 18px; border-left: 1px solid #828790; }
.shs i { width: 390px; }
.stabs { flex: none; display: flex; align-items: center; height: 25px; padding-left: 5px; background: #cfd3dc; border-top: 1px solid #666; color: #333b4c; }
.stabs button { display: flex; align-items: center; gap: 2px; height: 20px; padding: 0 3px 0 1px; margin: -4px 7px 0 0; }
.stabs svg { width: 16px; height: 16px; }
.stabs .act { background: #f4f7fd; border-radius: 0 0 3px 3px; }

.work { display: flex; flex-direction: column; min-width: 0; min-height: 0; border-left: 1px solid #6e6e6e; background: #f0f0f0; }
.scene { flex: 1; min-height: 0; width: 100%; background: #fcfcfc; border-bottom: 1px solid #d0d8d8; }
.dots { fill: none; stroke: #bcbcbc; stroke-width: 2; stroke-linecap: round; stroke-dasharray: 0 56.400; }
.brace path { stroke: #9a8bf4; stroke-width: 5; fill: none; }
.bdark { stroke: #6450d8; stroke-width: 4; fill: none; }
.col path { fill: #8878f4; }
.colc path { stroke: #7460ea; stroke-width: 9; }
.pur path { fill: none; stroke: #463a9e; stroke-width: 13; }
.purin path { fill: none; stroke: #7a67ee; stroke-width: 10; }
.light { fill: #9a8df4; stroke: #6a5cc8; stroke-width: 1; }
.beam path { fill: #7866ec; stroke: #43389a; stroke-width: 1; }
.topl { stroke: #6a6878; stroke-width: 1.500; fill: none; }
.wd { stroke: #fff; stroke-width: 4; stroke-linecap: round; fill: none; }
.ax { font: 9px "Liberation Sans", sans-serif; }

.tbar { flex: none; display: flex; align-items: flex-end; height: 50px; margin-top: 2px; padding: 0 0 2px 355px; border-top: 4px solid #cfd3dc; border-bottom: 1px solid #6e6e6e; background: linear-gradient(#e9eef8, #e2e7f1 40%, #cfd4df); }
.tbar .sep { margin-bottom: 4px; }
.grid { flex: none; height: 175px; overflow: hidden; background: #f0f0f0; padding-top: 2px; font: 11px/13px "Liberation Sans", sans-serif; }
table { border-collapse: separate; border-spacing: 0; table-layout: fixed; }
.grid table { width: 1455px; }
.cd { width: 365px; } .ce { width: 78px; } .cf { width: 1012px; }
th { font-weight: 400; padding: 0; }
.grid th, .grid td { border-right: 1px solid #a0a0a0; border-bottom: 1px solid #a0a0a0; }
.grid .let th { height: 15px; background: #e0e0e0; border-top: 1px solid #6e6e6e; border-color: #6e6e6e; line-height: 12px; }
.grid .hd th { height: 17px; vertical-align: bottom; padding-bottom: 2px; line-height: 14px; }
.grid .h1 th { height: 16px; padding-bottom: 2px; }
.grid .h1 th:first-child { line-height: 13px; text-align: right; padding-right: 70px; border-bottom: 0; }
.grid .hd:not(.h1) th:first-child { border-right: 0; }
.grid td { height: 16px; padding: 0 4px 0 0; text-align: right; background: #fff; }
.grid .cur td { background: #ffffc0; }
.wtabs { flex: none; display: flex; border-top: 2px solid #6e6e6e; height: 19px; white-space: nowrap; font: 11px/15px "Liberation Sans", sans-serif; }
.wtabs button { height: 16px; padding: 0 2px; background: #e3e3e3; border: solid #666; border-width: 0 1px 1px 0; border-radius: 0 0 4px 4px; }
.wtabs .w1 { width: 384px; text-align: right; padding-right: 7px; }
.hint { flex: none; height: 18px; font: 12px/18px "Liberation Sans", sans-serif; }

.status { flex: none; height: 20px; display: flex; align-items: center; justify-content: space-between; padding-left: 4px; border-top: 1px solid #a9afbc; background: linear-gradient(#d4d8e0, #a7acb6 50%, #b6bac4); color: #222936; }
.cells { display: flex; gap: 2px; margin-right: 86px; font: 11px/15px "Liberation Sans", sans-serif; }
.cells button { height: 18px; padding: 0 1px; border: 1px solid #f4f4f4; border-color: #f4f4f4 #9aa0ac #9aa0ac #f4f4f4; background: #b9bdc7; }
.cells .in { border-color: #000 #f4f4f4 #f4f4f4 #000; }

.dlg { position: absolute; left: 82px; top: 373px; width: 730px; height: 536px; border: 1px solid #5e5e5e; background: #f0f0f0; display: flex; flex-direction: column; }
.dlg header { flex: none; height: 25px; background: #fff; display: flex; align-items: center; justify-content: space-between; padding: 0 9px 0 3px; }
.cl svg { width: 12px; height: 12px; }
.dbody { flex: 1; display: flex; flex-direction: column; padding: 9px 8px 0; }
.box { display: flex; flex-direction: column; min-width: 0; }
.box h3 { height: 15px; padding-left: 2px; font: 11px/15px "Liberation Sans", sans-serif; color: #1c4778; background: #dbe4f3; clip-path: polygon(0 0, calc(100% - 9px) 0, 100% 9px, 100% 100%, 0 100%); }
.list { border: 1px solid #828790; border-color: #828790 #a9a4f0 #a9a4f0 #828790; background: #fff; height: 276px; display: flex; flex-direction: column; padding-right: 2px; }
.lrow { flex: 1; min-height: 0; display: flex; }
.tw { flex: 1; display: flex; font-family: Roboto, sans-serif; }
.tw table { width: 100%; height: 100%; }
.k1 { width: 105px; } .k2 { width: 49px; } .k3 { width: 70px; }
.tw th { height: 24px; line-height: 16px; text-align: left; padding-left: 5px; border-right: 1px solid #d8d8d8; white-space: nowrap; }
.tw th:nth-child(2), .tw th:nth-child(3), .tw td:nth-child(2), .tw td:nth-child(3) { text-align: center; padding: 0; }
.tw th:last-child { border-right: 0; }
.srt { width: 8px; height: 4px; margin: 0 0 -4px 43px; }
.tw td { height: 19px; line-height: 17px; padding: 0 0 0 3px; color: #fff; background: #0078d7; border: dotted #e0883c; border-width: 1px 0; box-shadow: inset -1px 0 #fff; }
.tw td:last-child { box-shadow: none; }
.tw .fill td { height: auto; background: none; border: 0; border-right: 1px solid #000; box-shadow: none; }
.tw .fill td:last-child { border: 0; }
.dvs i { flex: none; height: 191px; }
.dvs svg:last-child { margin-top: auto; }
.dhs i { width: 527px; }
.dhs svg:last-child { margin-left: 135px; }
.two { display: grid; grid-template-columns: 1fr 1fr; gap: 9px; margin-top: 11px; height: 147px; }
.ta { flex: 1; display: flex; border: 1px solid #828790; border-color: #828790 #a9a4f0 #a9a4f0 #828790; }
.ta textarea { flex: 1; resize: none; border: 0; outline: 0; padding: 0 2px; margin: 0; overflow: hidden; background: #f0f0f0; font: 11px/16px Roboto, sans-serif; }
.tvs { color: #b0b0b0; justify-content: space-between; border-left: 1px solid #fafafa; }
.blank { background: #f0f3fa; border: 1px solid #d8e2f4; border-color: #d8e2f4 #a9a4f0 #a9a4f0 #d8e2f4; }
.dlg footer { display: grid; grid-template-columns: 26px 26px 1fr; gap: 8px; margin-top: 8px; padding: 12px 0 0 1px; border-top: 1px solid #9a9a9a; box-shadow: inset 0 1px #fff; }
.sq { width: 26px; height: 22px; border: 1px solid #adadad; background: #e1e1e1; display: flex; align-items: center; justify-content: center; }
.sq svg { width: 16px; height: 16px; }
.ok { width: 74px; height: 22px; margin-left: 251px; border: 2px solid #0078d7; background: #e1e1e1; }
```
